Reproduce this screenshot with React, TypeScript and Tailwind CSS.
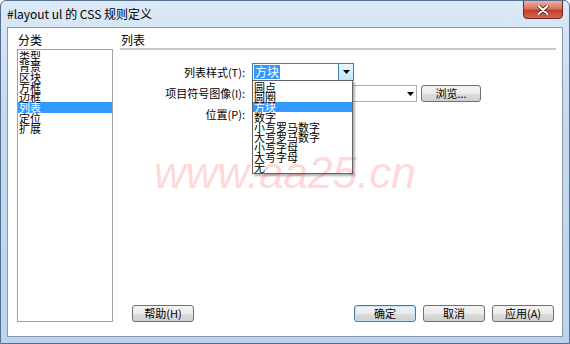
import React from "react";

const cjk = { fontFamily: '"Noto Sans CJK SC", "Noto Sans", sans-serif' };

function Btn({ label, primary = false, w = "w-[62px]" }: { label: string; primary?: boolean; w?: string }) {
  return (
    <div
      className={`${w} h-[17px] rounded-[3px] border ${
        primary ? "border-[#3c7fb1] shadow-[inset_0_0_0_1px_#bfe3f7]" : "border-[#707070]"
      } bg-[linear-gradient(#f4f4f4_0%,#ebebeb_50%,#dddddd_51%,#cfcfcf_100%)] flex items-center justify-center text-[11px] leading-none text-black`}
      style={cjk}
    >
      {label}
    </div>
  );
}

function Triangle() {
  return (
    <svg width="7" height="4" viewBox="0 0 7 4">
      <path d="M0 0 H7 L3.5 4 Z" fill="#000" />
    </svg>
  );
}

export default function App() {
  const cats = ["类型", "背景", "区块", "方框", "边框", "列表", "定位", "扩展"];
  const opts = ["圆点", "圆圈", "方块", "数字", "小写罗马数字", "大写罗马数字", "小写字母", "大写字母", "无"];
  return (
    <div className="relative w-[570px] h-[344px] overflow-hidden rounded-t-[6px] border border-[#55708f] bg-[linear-gradient(180deg,#dce9f7_0%,#c6dbf1_30%,#bcd3ec_100%)] flex flex-col select-none">
      {/* title bar */}
      <div className="h-[26px] flex items-start justify-between shrink-0">
        <div className="pl-[6px] pt-[6px] text-[12px] leading-[14px] text-black" style={cjk}>
          #layout ul 的 CSS 规则定义
        </div>
        <div className="mr-[6px] mt-[-1px] w-[40px] h-[19px] rounded-b-[4px] border border-[#6e2a1f] bg-[linear-gradient(180deg,#eab2a4_0%,#d9735f_45%,#c5402a_55%,#d2634c_100%)] flex items-center justify-center">
          <svg width="12" height="10" viewBox="0 0 12 10">
            <path d="M1.5 1 L10.5 9 M10.5 1 L1.5 9" stroke="#5a2018" strokeWidth="3.6" strokeLinecap="round" />
            <path d="M1.5 1 L10.5 9 M10.5 1 L1.5 9" stroke="#ffffff" strokeWidth="2" strokeLinecap="round" />
          </svg>
        </div>
      </div>

      {/* client */}
      <div className="mx-[6px] mb-[6px] flex-1 border border-[#8799b1] bg-white flex text-[12px] text-black" style={cjk}>
        {/* left */}
        <div className="ml-[9px] w-[96px] flex flex-col pt-[5px]">
          <div className="h-[16px] leading-[14px] pl-[1px]">分类</div>
          <div className="h-[273px] border border-[#9ea3aa] pt-[1px]">
            {cats.map((c) => (
              <div
                key={c}
                className={`h-[10.3px] text-[11px] leading-[10px] pl-[1px] ${c === "列表" ? "bg-[#3399ff] text-white" : ""}`}
              >
                {c}
              </div>
            ))}
          </div>
        </div>

        {/* right */}
        <div className="ml-[7px] mr-[6px] flex-1 flex flex-col pt-[5px]">
          <div className="h-[17px] leading-[14px] pl-[1px] border-b-2 border-[#c8c8c8]">列表</div>

          <div className="mt-[13px] flex flex-col gap-[4px]">
            <div className="flex items-center h-[18px]">
              <div className="w-[127px] text-right text-[11px] pr-[2px]">列表样式(T):</div>
              <div className="relative ml-[5px] w-[102px] h-[18px] border border-[#3c7fb1] flex items-center">
                <div className="ml-[1px] px-[1px] h-[14px] leading-[14px] bg-[#3399ff] text-white">方块</div>
                <div className="ml-auto w-[15px] h-full border-l border-[#3c7fb1] bg-[linear-gradient(#eaf6fd,#bee6fd)] flex items-center justify-center">
                  <Triangle />
                </div>
                {/* dropdown */}
                <div className="absolute left-[-1px] top-[16px] z-10 w-[101px] h-[94px] bg-white border border-[#646464] shadow-[2px_2px_2px_rgba(0,0,0,0.3)] pt-[1px]">
                  {opts.map((o) => (
                    <div
                      key={o}
                      className={`h-[10px] text-[11px] leading-[10px] pl-[1px] whitespace-nowrap ${o === "方块" ? "bg-[#3399ff] text-white" : ""}`}
                    >
                      {o}
                    </div>
                  ))}
                </div>
              </div>
            </div>
            <div className="flex items-center h-[17px]">
              <div className="w-[127px] text-right text-[11px] pr-[2px]">项目符号图像(I):</div>
              <div className="ml-[5px] w-[165px] h-[17px] border border-[#abadb3] flex items-center justify-end pr-[2px]">
                <Triangle />
              </div>
              <div className="ml-[4px]">
                <Btn label="浏览..." w="w-[60px]" />
              </div>
            </div>
            <div className="flex items-center h-[17px]">
              <div className="w-[127px] text-right text-[11px] pr-[2px]">位置(P):</div>
            </div>
          </div>

          <div className="mt-auto mb-[14px] flex items-center">
            <div className="ml-[12px]">
              <Btn label="帮助(H)" />
            </div>
            <div className="ml-auto mr-[2px] flex gap-[7px]">
              <Btn label="确定" primary />
              <Btn label="取消" />
              <Btn label="应用(A)" />
            </div>
          </div>
        </div>
      </div>

      {/* watermark */}
      <div
        className="pointer-events-none absolute left-[153px] top-[150px] z-20 text-[44px] leading-[44px] italic text-[#ff0000] opacity-[0.15] whitespace-nowrap"
        style={{ fontFamily: '"Liberation Sans", Arial, sans-serif' }}
      >
        www.aa25.cn
      </div>
    </div>
  );
}
